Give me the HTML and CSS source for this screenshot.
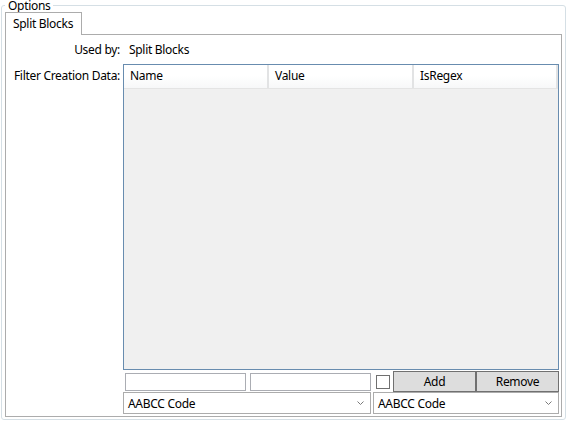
FILE: index.html
```html
<!DOCTYPE html>
<html lang="en">
<head>
    <meta charset="UTF-8">
    <title>Options</title>
    <link rel="stylesheet" href="styles.css">
</head>
<body>
    <fieldset class="options">
        <legend>Options</legend>
        <div class="tabs">
            <div class="tab-strip">
                <div class="tab is-selected">Split Blocks</div>
            </div>
            <div class="tab-page">
                <div class="field-label">Used by:</div>
                <div class="field-value">Split Blocks</div>

                <div class="field-label filter-label">Filter Creation Data:</div>
                <div class="data-grid">
                    <div class="grid-header">
                        <div class="grid-col">Name</div>
                        <div class="grid-col">Value</div>
                        <div class="grid-col">IsRegex</div>
                    </div>
                    <div class="grid-body"></div>
                </div>

                <div class="editor-row">
                    <input class="text-box" type="text">
                    <input class="text-box" type="text">
                    <span class="check-box"></span>
                    <button class="btn">Add</button>
                    <button class="btn">Remove</button>
                </div>

                <div class="combo-row">
                    <div class="combo combo-wide">
                        <span>AABCC Code</span>
                        <svg class="chevron" width="7" height="4" viewBox="0 0 7 4"><polyline points="0.5,0.5 3.5,3.5 6.5,0.5" /></svg>
                    </div>
                    <div class="combo combo-narrow">
                        <span>AABCC Code</span>
                        <svg class="chevron" width="7" height="4" viewBox="0 0 7 4"><polyline points="0.5,0.5 3.5,3.5 6.5,0.5" /></svg>
                    </div>
                </div>
            </div>
        </div>
    </fieldset>
</body>
</html>
```

FILE: styles.css
```css
html, body {
    margin: 0;
    background: #fff;
}
body {
    font-family: "Noto Sans", "Open Sans", sans-serif;
    font-size: 12px;
    letter-spacing: -0.3px;
    color: #000;
    padding: 0 1px;
}

/* group box */
.options {
    box-sizing: border-box;
    height: calc(100vh - 2px);
    min-width: 0;
    margin: 0;
    padding: 1px 3px 2px 3px;
    border: 1px solid #d5dfe5;
    border-radius: 3px;
    display: flex;
    flex-direction: column;
}
.options legend {
    padding: 0 2px 0 3px;
    line-height: 11px;
    color: #000;
}

/* tab control */
.tabs {
    flex: 1;
    display: flex;
    flex-direction: column;
}
.tab-strip {
    display: flex;
}
.tab {
    box-sizing: border-box;
    width: 77px;
    height: 23px;
    padding-left: 7px;
    line-height: 21px;
    border: 1px solid #acacac;
    border-bottom: none;
    margin-bottom: -1px;
    background: #fff;
    position: relative; /* sits over the page's top border */
    z-index: 1;
}
.tab-page {
    flex: 1;
    border: 1px solid #acacac;
    padding: 7px 2px 2px 7px;
    display: grid;
    grid-template-columns: 110px 436px;
    grid-template-rows: auto 1fr auto auto;
}

.field-label {
    text-align: right;
    white-space: nowrap;
    padding-right: 3px;
    line-height: 16px;
}
.field-value {
    padding-left: 6px;
    line-height: 16px;
}
.filter-label {
    margin-top: 6px;
    padding-top: 4px;
    align-self: start;
}

/* data grid */
.data-grid {
    margin-top: 6px;
    border: 1px solid #688caf;
    display: flex;
    flex-direction: column;
    background: #f0f0f0;
}
.grid-header {
    display: grid;
    grid-template-columns: 145px 145px 1fr;
    height: 23px;
    background: linear-gradient(#fff 0%, #fff 45%, #f7f8f9 100%);
    border-bottom: 1px solid #e4e4e4;
}
.grid-col {
    padding-left: 6px;
    line-height: 22px;
    border-right: 2px solid #e2e3e4;
}
.grid-body {
    flex: 1;
}

/* input rows under the grid */
.editor-row {
    grid-column: 2;
    margin-top: 1px;
    height: 21px;
    display: flex;
    align-items: center;
    padding-left: 2px;
}
.text-box {
    box-sizing: border-box;
    width: 121px;
    height: 18px;
    margin: 0 4px 0 0;
    padding: 0;
    border: 1px solid #abadb3;
    background: #fff;
}
.text-box + .text-box {
    margin-right: 5px;
}
.check-box {
    box-sizing: border-box;
    width: 14px;
    height: 14px;
    border: 1px solid #707070;
    background: #fff;
    margin-right: 3px;
}
.btn {
    box-sizing: border-box;
    width: 83px;
    height: 21px;
    margin: 0;
    padding: 0;
    font: inherit;
    letter-spacing: inherit;
    color: #000;
    background: #dddddd;
    border: 1px solid #707070;
}

.combo-row {
    grid-column: 2;
    display: flex;
    gap: 2px;
}
.combo {
    box-sizing: border-box;
    height: 22px;
    display: flex;
    align-items: center;
    justify-content: space-between;
    padding: 0 6px 0 4px;
    border: 1px solid #acacac;
    background: #fff;
}
.combo-wide {
    width: 248px;
}
.combo-narrow {
    width: 186px;
}
.chevron polyline {
    fill: none;
    stroke: #7a7a7a;
    stroke-width: 1;
}
```
